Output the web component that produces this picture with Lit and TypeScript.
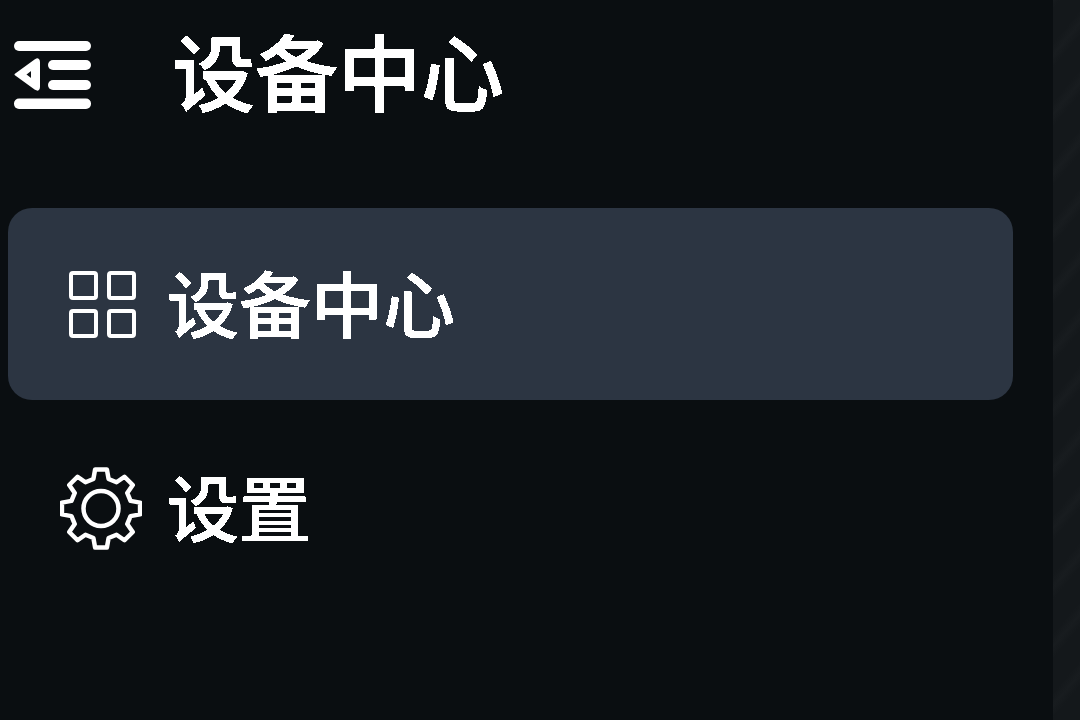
import { LitElement, html, css, svg } from "lit";
import { customElement } from "lit/decorators.js";

function gearPath(cx: number, cy: number, rOut: number, rIn: number, teeth: number): string {
  const step = (Math.PI * 2) / teeth;
  const parts: string[] = [];
  for (let i = 0; i < teeth; i++) {
    const a = -Math.PI / 2 + i * step;
    const p = (r: number, d: number) =>
      `${(cx + r * Math.cos(a + d * step)).toFixed(2)} ${(cy + r * Math.sin(a + d * step)).toFixed(2)}`;
    parts.push(
      `${i === 0 ? "M" : "L"}${p(rIn, -0.32)}`,
      `L${p(rOut, -0.19)}`,
      `L${p(rOut, 0.19)}`,
      `L${p(rIn, 0.32)}`
    );
  }
  return parts.join(" ") + "Z";
}

@customElement("app-root")
export class AppRoot extends LitElement {
  static styles = css`
    :host {
      display: block;
      width: 1080px;
      height: 720px;
      overflow: hidden;
      font-family: "Noto Sans CJK SC", sans-serif;
      color: #fff;
    }
    .page {
      display: flex;
      height: 720px;
      background: #14181b;
    }
    .sidebar {
      width: 1053px;
      flex: none;
      background: #0a0e11;
      display: flex;
      flex-direction: column;
      gap: 12px;
      box-sizing: border-box;
      padding-right: 40px;
    }
    .stripes {
      flex: 1;
      background: repeating-linear-gradient(
        -50deg,
        #14181b 0,
        #14181b 22px,
        #181c1f 30px,
        #14181b 38px
      );
    }
    .header {
      height: 150px;
      margin-bottom: 46px;
      display: flex;
      align-items: center;
      padding-left: 14px;
      gap: 80px;
    }
    .title {
      font-size: 83px;
      font-weight: 500;
      line-height: 1;
      white-space: nowrap;
      padding-bottom: 11px;
      -webkit-text-stroke: 1px #fff;
      filter: url(#alias);
    }
    .row {
      height: 192px;
      margin-left: 8px;
      border-radius: 24px;
      display: flex;
      align-items: center;
      padding-left: 52px;
      gap: 25px;
      font-size: 72px;
      font-weight: 500;
      line-height: 1;
    }
    .row span {
      padding-bottom: 6px;
      -webkit-text-stroke: 0.6px #fff;
      filter: url(#alias);
    }
    .row.active {
      background: #2c3542;
    }
    .grid-icon {
      margin-top: 2px;
    }
    svg {
      display: block;
      flex: none;
    }
    .defs {
      width: 0;
      height: 0;
      position: absolute;
    }
  `;

  render() {
    return html`
      <svg class="defs" aria-hidden="true">
        <filter id="alias" x="0" y="0" width="100%" height="100%" color-interpolation-filters="sRGB">
          <feComponentTransfer>
            <feFuncA type="discrete" tableValues="0 1" />
          </feComponentTransfer>
        </filter>
      </svg>
      <div class="page">
        <aside class="sidebar">
          <header class="header">
            <svg width="78" height="70" viewBox="0 0 78 70" fill="#fff">
              <rect x="0" y="1" width="77" height="10" rx="5" />
              <rect x="34" y="20" width="43" height="10" rx="5" />
              <rect x="34" y="40" width="43" height="10" rx="5" />
              <rect x="0" y="58.5" width="77" height="10.5" rx="5" />
              <path
                fill-rule="evenodd"
                stroke="#fff"
                stroke-width="2"
                stroke-linejoin="round"
                d="M1.5 34.5 L21.5 20 Q25 18 25 22 V47 Q25 51 21.5 49 Z M11 34.5 L18 40 V29 Z"
              />
            </svg>
            <span class="title">设备中心</span>
          </header>
          <div class="row active">
            <svg class="grid-icon" width="82" height="68" viewBox="0 0 82 68" fill="none" stroke="#fff" stroke-width="4">
              <rect x="11" y="2" width="25" height="25" rx="2" />
              <rect x="49" y="2" width="25" height="25" rx="2" />
              <rect x="11" y="40" width="25" height="25" rx="2" />
              <rect x="49" y="40" width="25" height="25" rx="2" />
            </svg>
            <span>设备中心</span>
          </div>
          <div class="row">
            <svg width="82" height="85" viewBox="0 0 82 85" fill="none" stroke="#fff" stroke-width="4.5" stroke-linejoin="round">
              ${svg`<path d=${gearPath(41, 42.5, 39.5, 30.5, 8)} />`}
              <circle cx="41" cy="42.5" r="17.5" />
            </svg>
            <span>设置</span>
          </div>
        </aside>
        <div class="stripes"></div>
      </div>
    `;
  }
}
